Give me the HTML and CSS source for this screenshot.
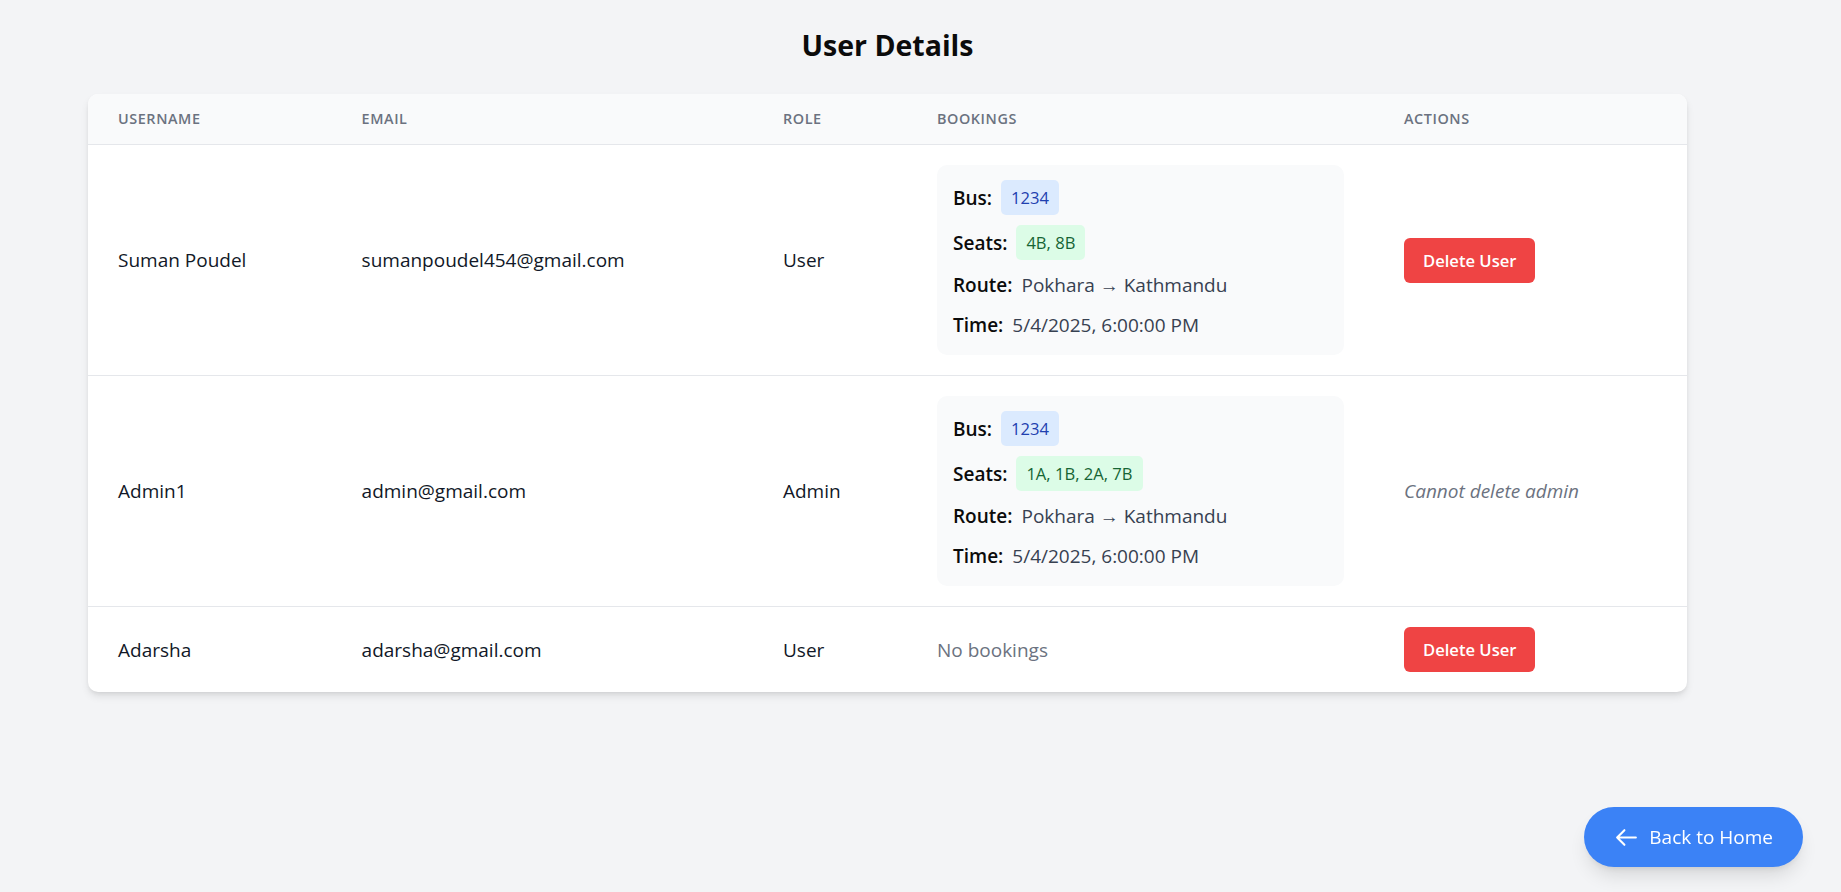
FILE: index.html
```html
<!DOCTYPE html>
<html lang="en">
<head>
<meta charset="utf-8">
<title>User Details</title>
<link rel="stylesheet" href="styles.css">
</head>
<body>
<main class="page">
  <h1 class="title">User Details</h1>
  <div class="card">
    <table class="users">
      <colgroup>
        <col class="c-user"><col class="c-email"><col class="c-role"><col class="c-book"><col class="c-act">
      </colgroup>
      <thead>
        <tr>
          <th>Username</th>
          <th>Email</th>
          <th>Role</th>
          <th>Bookings</th>
          <th>Actions</th>
        </tr>
      </thead>
      <tbody>
        <tr>
          <td>Suman Poudel</td>
          <td>sumanpoudel454@gmail.com</td>
          <td>User</td>
          <td>
            <div class="booking">
              <div class="line"><span class="label">Bus:</span><span class="badge badge-blue">1234</span></div>
              <div class="line"><span class="label">Seats:</span><span class="badge badge-green">4B, 8B</span></div>
              <div class="line"><span class="label">Route:</span><span class="value">Pokhara → Kathmandu</span></div>
              <div class="line"><span class="label">Time:</span><span class="value">5/4/2025, 6:00:00 PM</span></div>
            </div>
          </td>
          <td><button class="delete">Delete User</button></td>
        </tr>
        <tr>
          <td>Admin1</td>
          <td>admin@gmail.com</td>
          <td>Admin</td>
          <td>
            <div class="booking">
              <div class="line"><span class="label">Bus:</span><span class="badge badge-blue">1234</span></div>
              <div class="line"><span class="label">Seats:</span><span class="badge badge-green">1A, 1B, 2A, 7B</span></div>
              <div class="line"><span class="label">Route:</span><span class="value">Pokhara → Kathmandu</span></div>
              <div class="line"><span class="label">Time:</span><span class="value">5/4/2025, 6:00:00 PM</span></div>
            </div>
          </td>
          <td><span class="muted italic">Cannot delete admin</span></td>
        </tr>
        <tr>
          <td>Adarsha</td>
          <td>adarsha@gmail.com</td>
          <td>User</td>
          <td><span class="muted">No bookings</span></td>
          <td><button class="delete">Delete User</button></td>
        </tr>
      </tbody>
    </table>
  </div>
</main>
<a class="back" href="#">
  <svg class="back-icon" viewBox="0 0 24 24" fill="none" stroke="currentColor" stroke-width="2" stroke-linecap="round" stroke-linejoin="round"><path d="M10 19l-7-7m0 0l7-7m-7 7h18"/></svg>
  <span>Back to Home</span>
</a>
</body>
</html>
```
FILE: styles.css
```css
* { box-sizing: border-box; }

html, body {
  margin: 0;
  padding: 0;
}

body {
  background: #f3f4f6;
  font-family: "Open Sans", "Noto Sans", sans-serif;
  color: #111827;
  min-height: 892px;
}

.page {
  width: 1599px;
  margin-left: 88px;
  padding-top: 25px;
}

.title {
  margin: 0 0 29px;
  text-align: center;
  font-size: 28.5px;
  line-height: 40px;
  font-weight: 700;
  color: #0b0b0b;
}

.card {
  background: #ffffff;
  border-radius: 10px;
  overflow: hidden;
  box-shadow: 0 5px 8px -1px rgba(0, 0, 0, 0.1), 0 2px 5px -2px rgba(0, 0, 0, 0.1);
}

.users {
  width: 100%;
  border-collapse: collapse;
  table-layout: fixed;
}

.c-user { width: 243.6px; }
.c-email { width: 421.4px; }
.c-role { width: 154px; }
.c-book { width: 467px; }
.c-act { width: 313px; }

.users thead tr {
  background: #f9fafb;
  border-bottom: 1px solid #e5e7eb;
}

.users th {
  text-align: left;
  padding: 15px 30px;
  font-size: 14.4px;
  line-height: 20px;
  font-weight: 600;
  color: #6b7280;
  text-transform: uppercase;
  letter-spacing: 0.04em;
}

.users tbody tr + tr {
  border-top: 1px solid #e5e7eb;
}

.users td {
  padding: 20px 30px;
  font-size: 19px;
  line-height: 30px;
  color: #111827;
  vertical-align: middle;
}

.booking {
  background: #f9fafb;
  border-radius: 10px;
  padding: 15px 16px;
  display: flex;
  flex-direction: column;
  gap: 10px;
}

.line {
  display: flex;
  align-items: center;
  gap: 9px;
  line-height: 30px;
}

.label {
  font-weight: 600;
  color: #0b0b0b;
}

.value {
  color: #374151;
}

.badge {
  font-size: 16.6px;
  line-height: 25px;
  padding: 5px 10px;
  border-radius: 5px;
}

.badge-blue {
  background: #dbeafe;
  color: #1e40af;
}

.badge-green {
  background: #dcfce7;
  color: #166534;
}

.muted {
  color: #6b7280;
}

.italic {
  font-style: italic;
}

.delete {
  font-family: inherit;
  background: #ef4444;
  color: #ffffff;
  border: none;
  border-radius: 6px;
  padding: 10px 19px;
  font-size: 16.6px;
  line-height: 25px;
  font-weight: 600;
  cursor: pointer;
}

.back {
  position: fixed;
  right: 38px;
  bottom: 25px;
  display: flex;
  align-items: center;
  gap: 10px;
  padding: 15px 30px;
  background: #3b82f6;
  color: #ffffff;
  border-radius: 9999px;
  font-size: 19px;
  line-height: 30px;
  text-decoration: none;
  box-shadow: 0 12px 19px -4px rgba(0, 0, 0, 0.12), 0 5px 8px -5px rgba(0, 0, 0, 0.12);
}

.back-icon {
  width: 25px;
  height: 25px;
  flex: none;
}
```
